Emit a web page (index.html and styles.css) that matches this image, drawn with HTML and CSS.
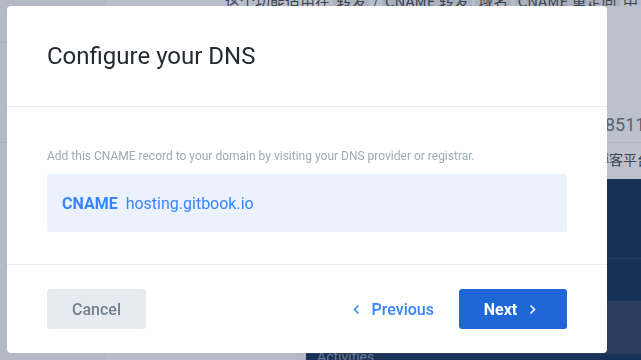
FILE: index.html
```html
<!DOCTYPE html>
<html lang="en">
<head>
  <meta charset="UTF-8">
  <title>Configure your DNS</title>
  <meta name="viewport" content="width=device-width, initial-scale=1.0">
  <link rel="stylesheet" href="styles.css">
</head>
<body>

  <!-- App underneath the dialog -->
  <div class="app">
    <div class="sidebar">
      <div class="sidebar-row"></div>
      <div class="sidebar-row"></div>
    </div>
    <div class="doc-line">这个功能适用在 <span class="code">转发</span> / <span class="code">CNAME 转发</span> <span class="code">域名</span> <span class="code">CNAME 重定向</span> 中（</div>
    <div class="content"></div>
    <div class="panel">
      <div class="panel-top">
        <div class="panel-item panel-number">85119988</div>
        <div class="panel-item">博客平台</div>
      </div>
      <div class="panel-dark">
        <div class="panel-block"></div>
        <div class="panel-block"></div>
        <div class="panel-block light"></div>
        <div class="panel-label">Activities</div>
      </div>
    </div>
  </div>

  <!-- Dialog -->
  <div class="modal">
    <div class="modal-header">
      <h1>Configure your DNS</h1>
    </div>
    <div class="modal-body">
      <p class="hint">Add this CNAME record to your domain by visiting your DNS provider or registrar.</p>
      <div class="record">
        <span class="record-type">CNAME</span>
        <span class="record-value">hosting.gitbook.io</span>
      </div>
    </div>
    <div class="modal-footer">
      <button class="btn btn-cancel">Cancel</button>
      <div class="nav">
        <button class="btn btn-link">
          <svg width="7" height="11" viewBox="0 0 7 11"><path d="M5.5 1.5 1.5 5.5l4 4" fill="none" stroke="currentColor" stroke-width="1.6"/></svg>
          Previous
        </button>
        <button class="btn btn-primary">
          Next
          <svg width="7" height="11" viewBox="0 0 7 11"><path d="M1.5 1.5l4 4-4 4" fill="none" stroke="currentColor" stroke-width="1.6"/></svg>
        </button>
      </div>
    </div>
  </div>

</body>
</html>
```

FILE: styles.css
```css
body {
  margin: 0;
  width: 641px;
  height: 360px;
  overflow: hidden;
  background-color: #b6bdc8;
  font-family: Roboto, 'Noto Sans CJK SC', sans-serif;
}

.app {
  display: grid;
  grid-template-columns: 106px 200px 1fr;
  grid-template-rows: 6px 1fr;
  height: 360px;
}

.sidebar {
  grid-row: 1 / 3;
  background-color: #b3bac5;
  border-right: 1px solid #aeb5c0;
}

.sidebar-row {
  height: 42px;
  border-bottom: 1px solid #a9b0bb;
}

.sidebar-row + .sidebar-row {
  height: 99px;
}

.doc-line {
  grid-column: 2 / 4;
  overflow: hidden;
  padding-left: 119px;
  background-color: #b8bec9;
  white-space: nowrap;
  font-family: 'Noto Sans CJK SC', sans-serif;
  font-size: 15px;
  line-height: 2px;
  color: #3c4350;
}

.doc-line .code {
  background-color: #aab1bc;
  padding: 0 3px;
}

.content {
  background-color: #b8bec9;
  border-right: 10px solid #b2b9c4;
}

.panel {
  display: flex;
  flex-direction: column;
}

.panel-top {
  height: 173px;
  padding-top: 102px;
  padding-left: 299px;
  box-sizing: border-box;
  background-color: #bcc2cc;
  white-space: nowrap;
}

.panel-item {
  height: 34px;
  line-height: 34px;
  font-size: 14px;
  color: #3d4452;
}

.panel-item + .panel-item {
  padding-left: 4px;
  text-indent: -14px;
}

.panel-number {
  font-size: 18px;
  color: #5a6170;
  border-bottom: 1px solid #b0b7c2;
}

.panel-dark {
  flex: 1;
  display: flex;
  flex-direction: column;
  background-color: #1a3157;
}

.panel-block {
  height: 79px;
  border-bottom: 1px solid #263d62;
}

.panel-block + .panel-block {
  height: 42px;
  border-bottom: none;
}

.panel-block.light {
  height: 53px;
  background-color: #2b3e5e;
}

.panel-label {
  padding-left: 11px;
  margin-top: -5px;
  font-size: 14px;
  line-height: 16px;
  color: #6c7b95;
}

.modal {
  position: fixed;
  top: 6px;
  left: 7px;
  width: 600px;
  height: 347px;
  display: flex;
  flex-direction: column;
  background-color: #fff;
  border-radius: 4px;
  overflow: hidden;
}

.modal-header {
  height: 100px;
  display: flex;
  align-items: center;
  padding: 0 40px;
  border-bottom: 1px solid #e6ecf1;
}

.modal-header h1 {
  margin: 0;
  font-size: 24px;
  font-weight: 400;
  color: #242a31;
}

.modal-body {
  padding: 40px 40px 32px;
  border-bottom: 1px solid #e6ecf1;
}

.hint {
  margin: 0 0 9px;
  font-size: 12px;
  line-height: 18px;
  color: #9daab6;
}

.record {
  height: 58px;
  display: flex;
  align-items: center;
  gap: 8px;
  padding: 0 15px;
  background-color: #ebf2fe;
  border-radius: 3px;
  font-size: 16px;
  color: #3884ff;
}

.record-type {
  font-weight: 700;
}

.modal-footer {
  flex: 1;
  display: flex;
  align-items: center;
  justify-content: space-between;
  padding: 0 40px;
}

.nav {
  display: flex;
  gap: 9px;
}

.btn {
  height: 40px;
  display: flex;
  align-items: center;
  justify-content: center;
  border: none;
  border-radius: 3px;
  font-family: Roboto, sans-serif;
  font-size: 16px;
  font-weight: 500;
  cursor: pointer;
}

.btn-cancel {
  width: 99px;
  background-color: #e6ebf1;
  color: #74818d;
}

.btn-link {
  gap: 12px;
  padding: 0 16px;
  background: none;
  color: #3884ff;
}

.btn-primary {
  width: 108px;
  gap: 12px;
  padding-right: 12px;
  background-color: #1f66d6;
  color: #fff;
  font-weight: 700;
}
```
